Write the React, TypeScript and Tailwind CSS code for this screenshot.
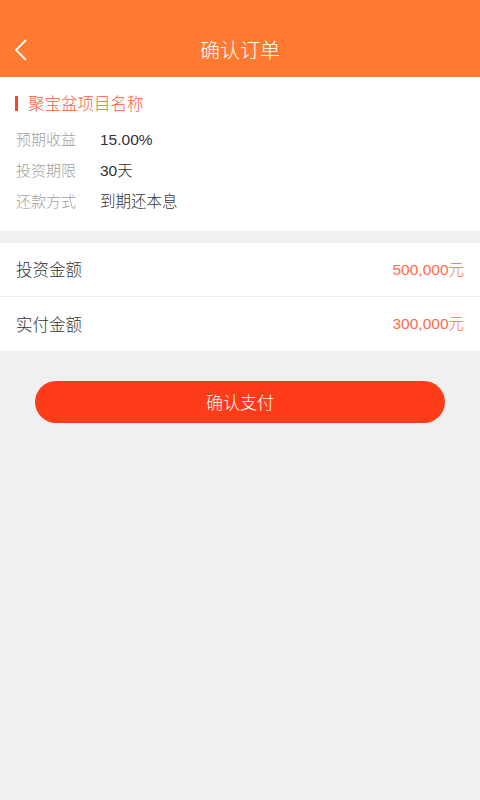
const font = { fontFamily: '"Noto Sans CJK SC", "Noto Sans", sans-serif' };
const num = { fontFamily: '"Liberation Sans", "Noto Sans CJK SC", sans-serif' };

export default function App() {
  const info = [
    { label: "预期收益", value: "15.00%" },
    { label: "投资期限", value: "30天" },
    { label: "还款方式", value: "到期还本息" },
  ];
  const amounts = [
    { label: "投资金额", value: "500,000元" },
    { label: "实付金额", value: "300,000元" },
  ];

  return (
    <div className="min-h-[800px] w-[480px] bg-[#f0f0f0] font-light" style={font}>
      {/* header */}
      <div className="relative flex h-[77px] items-end justify-center bg-[#ff7a30] pb-[13px]">
        <button className="absolute left-[12px] top-[38px] text-white">
          <svg width="18" height="24" viewBox="0 0 18 24" fill="none" stroke="currentColor" strokeWidth="1.8">
            <polyline points="14,2 4,12 14,22" />
          </svg>
        </button>
        <h1 className="text-[20px] leading-[28px] text-white">确认订单</h1>
      </div>

      {/* project info */}
      <div className="bg-white pb-[19px] pt-[14px]">
        <div className="flex items-center px-[15px]">
          <span className="mr-[10px] h-[15px] w-[3px] bg-[#ff4422]" />
          <span className="text-[16.5px] leading-[24px] text-[#ff5a3c]">聚宝盆项目名称</span>
        </div>
        <div className="mt-[13px] flex flex-col gap-[9px] px-[16px]">
          {info.map((r) => (
            <div key={r.label} className="flex h-[22px] items-baseline text-[15px] leading-[22px]">
              <span className="w-[84px] text-[#a0a0a0]">{r.label}</span>
              <span className="text-[15.5px] leading-[22px] text-[#333]" style={num}>
                {r.value}
              </span>
            </div>
          ))}
        </div>
      </div>

      {/* amounts */}
      <div className="mt-[12px] bg-white">
        {amounts.map((r, i) => (
          <div
            key={r.label}
            className={`flex h-[54px] items-center justify-between px-[16px] ${i === 0 ? "border-b border-[#ececec]" : ""}`}
          >
            <span className="text-[16.5px] text-[#333]">{r.label}</span>
            <span className="text-[15.5px] text-[#ff6a4c]" style={num}>
              {r.value}
            </span>
          </div>
        ))}
      </div>

      <div className="px-[35px] pt-[30px]">
        <button className="h-[42px] w-full rounded-full bg-[#ff3c1a] text-[17px] font-light text-white">确认支付</button>
      </div>
    </div>
  );
}
